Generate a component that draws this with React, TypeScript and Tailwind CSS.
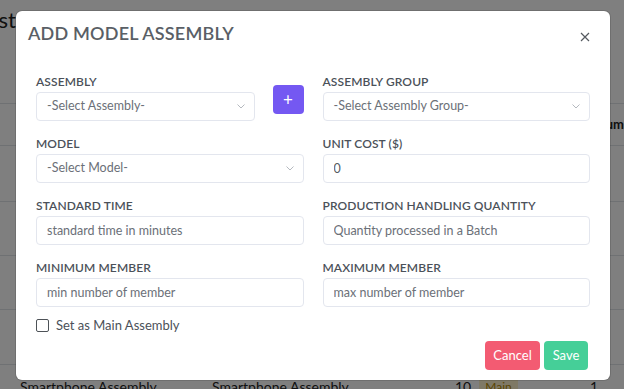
import React from "react";

const font = { fontFamily: "Lato, 'Open Sans', Arial, sans-serif" };

function Chevron() {
  return (
    <svg width="8" height="5" viewBox="0 0 8 5" fill="none">
      <polyline points="0.5,0.5 4,4 7.5,0.5" stroke="#b5b9bf" strokeWidth="1" />
    </svg>
  );
}

function Label({ children }: { children: React.ReactNode }) {
  return (
    <div className="text-[12px] leading-[16px] font-semibold text-[#4b5159] mb-[2px] tracking-[0.1px]">
      {children}
    </div>
  );
}

function SelectBox({ text }: { text: string }) {
  return (
    <div className="h-[29px] w-full border border-[#e3e6ee] rounded-[4px] flex items-center justify-between pl-[10px] pr-[9px] text-[12.5px] text-[#6b7078]">
      <span>{text}</span>
      <Chevron />
    </div>
  );
}

function TextBox({ placeholder, value }: { placeholder?: string; value?: string }) {
  return (
    <input
      readOnly
      value={value}
      placeholder={placeholder}
      className="h-[29px] w-full border border-[#e3e6ee] rounded-[4px] px-[10px] text-[12.5px] text-[#555b63] placeholder:text-[#6b7078] outline-none bg-white"
      style={font}
    />
  );
}

export default function App() {
  return (
    <div className="relative w-[624px] h-[389px] overflow-hidden bg-white" style={font}>
      {/* underlying page */}
      <div className="flex flex-col text-[#222]">
        <div className="h-[103px] pt-[8px]">
          <div className="w-[16px] overflow-hidden flex justify-end whitespace-nowrap text-[22px] leading-[24px]">
            Model Assembly List
          </div>
        </div>
        <div className="h-[42px] border-t border-[#dee2e6] flex items-center text-[13px] font-bold whitespace-nowrap">
          <div className="w-[599px] pl-[20px]">Assembly</div>
          <div>Minimum</div>
        </div>
        {[56, 54, 54, 55].map((h, i) => (
          <div key={i} style={{ height: h }} className="border-t border-[#dee2e6]" />
        ))}
        <div className="border-t border-[#dee2e6] pt-[11px] flex items-center text-[14px] whitespace-nowrap">
          <div className="w-[212px] pl-[20px]">Smartphone Assembly</div>
          <div className="w-[243px]">Smartphone Assembly</div>
          <div className="w-[135px] flex items-center gap-[8px]">
            <span>10</span>
            <span className="bg-[#fff3cd] text-[#b58a00] px-[6px] text-[12px]">Main</span>
          </div>
          <div>1</div>
        </div>
      </div>

      {/* overlay */}
      <div className="absolute inset-0 bg-black/50 pl-[16px] pt-[11px]">
        <div className="w-[594px] h-[369px] bg-white rounded-[6px] shadow-[0_0_0_1px_rgba(0,0,0,0.12)] flex flex-col">
          <div className="pt-[10px] pl-[12px] pr-[20px] flex items-center justify-between">
            <h1 className="text-[18px] leading-[24px] font-semibold text-[#5a5f66] tracking-[0.2px]">
              ADD MODEL ASSEMBLY
            </h1>
            <svg width="10" height="10" viewBox="0 0 10 10" className="mt-[8px] mr-[0px]">
              <path d="M1 1 L9 9 M9 1 L1 9" stroke="#555a60" strokeWidth="1.2" />
            </svg>
          </div>

          <div className="mt-[29px] px-[20px] grid grid-cols-2 gap-x-[19px] gap-y-[15px]">
            <div className="flex items-end gap-[18px]">
              <div className="w-[220px]">
                <Label>ASSEMBLY</Label>
                <SelectBox text="-Select Assembly-" />
              </div>
              <div className="w-[31px] h-[29px] mb-[7px] shrink-0 rounded-[4px] bg-[#7458f2] flex items-center justify-center text-white text-[17px] leading-none">
                +
              </div>
            </div>
            <div>
              <Label>ASSEMBLY GROUP</Label>
              <SelectBox text="-Select Assembly Group-" />
            </div>
            <div>
              <Label>MODEL</Label>
              <SelectBox text="-Select Model-" />
            </div>
            <div>
              <Label>UNIT COST ($)</Label>
              <TextBox value="0" />
            </div>
            <div>
              <Label>STANDARD TIME</Label>
              <TextBox placeholder="standard time in minutes" />
            </div>
            <div>
              <Label>PRODUCTION HANDLING QUANTITY</Label>
              <TextBox placeholder="Quantity processed in a Batch" />
            </div>
            <div>
              <Label>MINIMUM MEMBER</Label>
              <TextBox placeholder="min number of member" />
            </div>
            <div>
              <Label>MAXIMUM MEMBER</Label>
              <TextBox placeholder="max number of member" />
            </div>
          </div>

          <div className="mt-[12px] pl-[20px] flex items-center gap-[7px] h-[13px]">
            <div className="w-[13px] h-[13px] border-[1.5px] border-[#4d5257] rounded-[2px]" />
            <span className="text-[13px] text-[#4b5159]">Set as Main Assembly</span>
          </div>

          <div className="mt-[9px] pr-[22px] flex justify-end gap-[4px]">
            <div className="w-[55px] h-[29px] rounded-[4px] bg-[#f35b72] text-white text-[13px] flex items-center justify-center">
              Cancel
            </div>
            <div className="w-[44px] h-[29px] rounded-[4px] bg-[#45cf98] text-white text-[13px] flex items-center justify-center">
              Save
            </div>
          </div>
        </div>
      </div>
    </div>
  );
}
